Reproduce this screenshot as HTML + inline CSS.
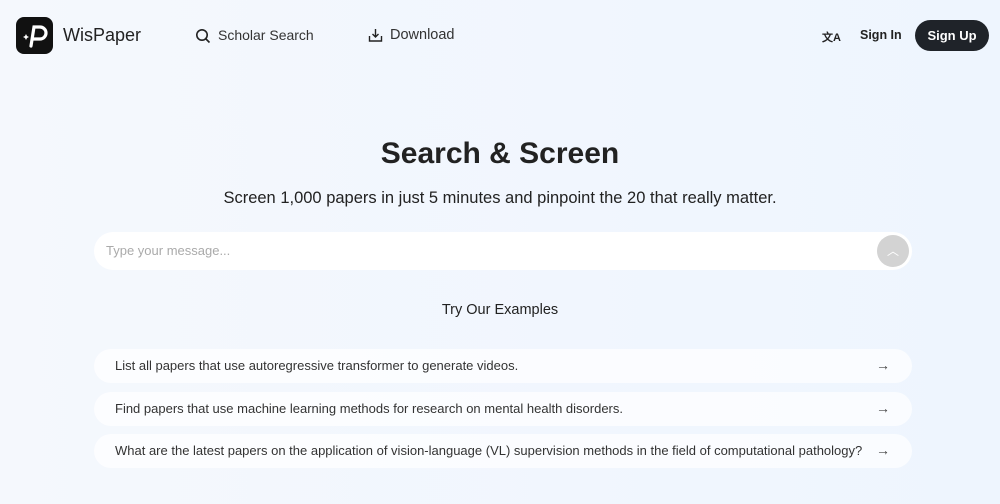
<!DOCTYPE html><html><head><style>
*{margin:0;padding:0;box-sizing:border-box}
body{width:1000px;height:504px;overflow:hidden;background:linear-gradient(90deg,#f5f8fd,#eef5fe);font-family:"Liberation Sans",sans-serif;color:#222;position:relative}
.a{position:absolute}
.logo{left:16px;top:17px;width:37px;height:37px;background:#111;border-radius:8px}
.pill{left:94px;width:818px;background:rgba(255,255,255,.7);border-radius:17px;height:34px;font-size:13px;color:#333;padding:9px 0 0 21px}
.arr{position:absolute;right:22px;top:8px;font-size:14px;color:#444}
</style></head><body>
<div class="a logo"><svg width="37" height="37"><path d="M15 29 L18 10 H24 a6 6 0 0 1 0 12 H17" stroke="#fff" stroke-width="3.2" fill="none" stroke-linecap="round"/><path d="M10 17 l1 2 2 1 -2 1 -1 2 -1 -2 -2 -1 2 -1z" fill="#fff"/></svg></div>
<div class="a" style="left:63px;top:25px;font-size:18px;color:#222">WisPaper</div>
<svg class="a" style="left:195px;top:28px" width="16" height="16"><circle cx="7" cy="7" r="5.2" stroke="#222" stroke-width="1.6" fill="none"/><path d="M11 11l3.5 3.5" stroke="#222" stroke-width="1.6"/></svg>
<div class="a" style="left:218px;top:27px;font-size:14px;color:#333">Scholar Search</div>
<svg class="a" style="left:368px;top:28px" width="15" height="15"><path d="M7.5 1v8M4.5 6l3 3 3-3M1.5 8v5h12V8" stroke="#222" stroke-width="1.4" fill="none"/></svg>
<div class="a" style="left:390px;top:27px;font-size:14.5px;color:#333">Download</div>
<div class="a" style="left:822px;top:29px;font-size:11px;font-weight:bold">文A</div>
<div class="a" style="left:860px;top:28px;font-size:12.5px;font-weight:bold">Sign In</div>
<div class="a" style="left:915px;top:20px;width:74px;height:31px;background:#1f2329;color:#fff;border-radius:16px;font-size:13px;font-weight:bold;text-align:center;line-height:31px">Sign Up</div>
<div class="a" style="left:0;width:1000px;top:137px;text-align:center;font-size:30px;font-weight:bold;color:#222">Search &amp; Screen</div>
<div class="a" style="left:0;width:1000px;top:189px;text-align:center;font-size:16.5px;color:#222">Screen 1,000 papers in just 5 minutes and pinpoint the 20 that really matter.</div>
<div class="a" style="left:94px;top:232px;width:818px;height:38px;background:#fff;border-radius:19px;font-size:13px;color:#aaa;padding:11px 0 0 12px">Type your message...<div style="position:absolute;right:3px;top:3px;width:32px;height:32px;border-radius:50%;background:#d3d3d3;color:#fff;text-align:center;line-height:32px;font-size:12px">︿</div></div>
<div class="a" style="left:0;width:1000px;top:302px;text-align:center;font-size:14.5px;color:#222">Try Our Examples</div>
<div class="a pill" style="top:349px">List all papers that use autoregressive transformer to generate videos.<span class="arr">→</span></div>
<div class="a pill" style="top:392px">Find papers that use machine learning methods for research on mental health disorders.<span class="arr">→</span></div>
<div class="a pill" style="top:434px">What are the latest papers on the application of vision-language (VL) supervision methods in the field of computational pathology?<span class="arr">→</span></div>
</body></html>
